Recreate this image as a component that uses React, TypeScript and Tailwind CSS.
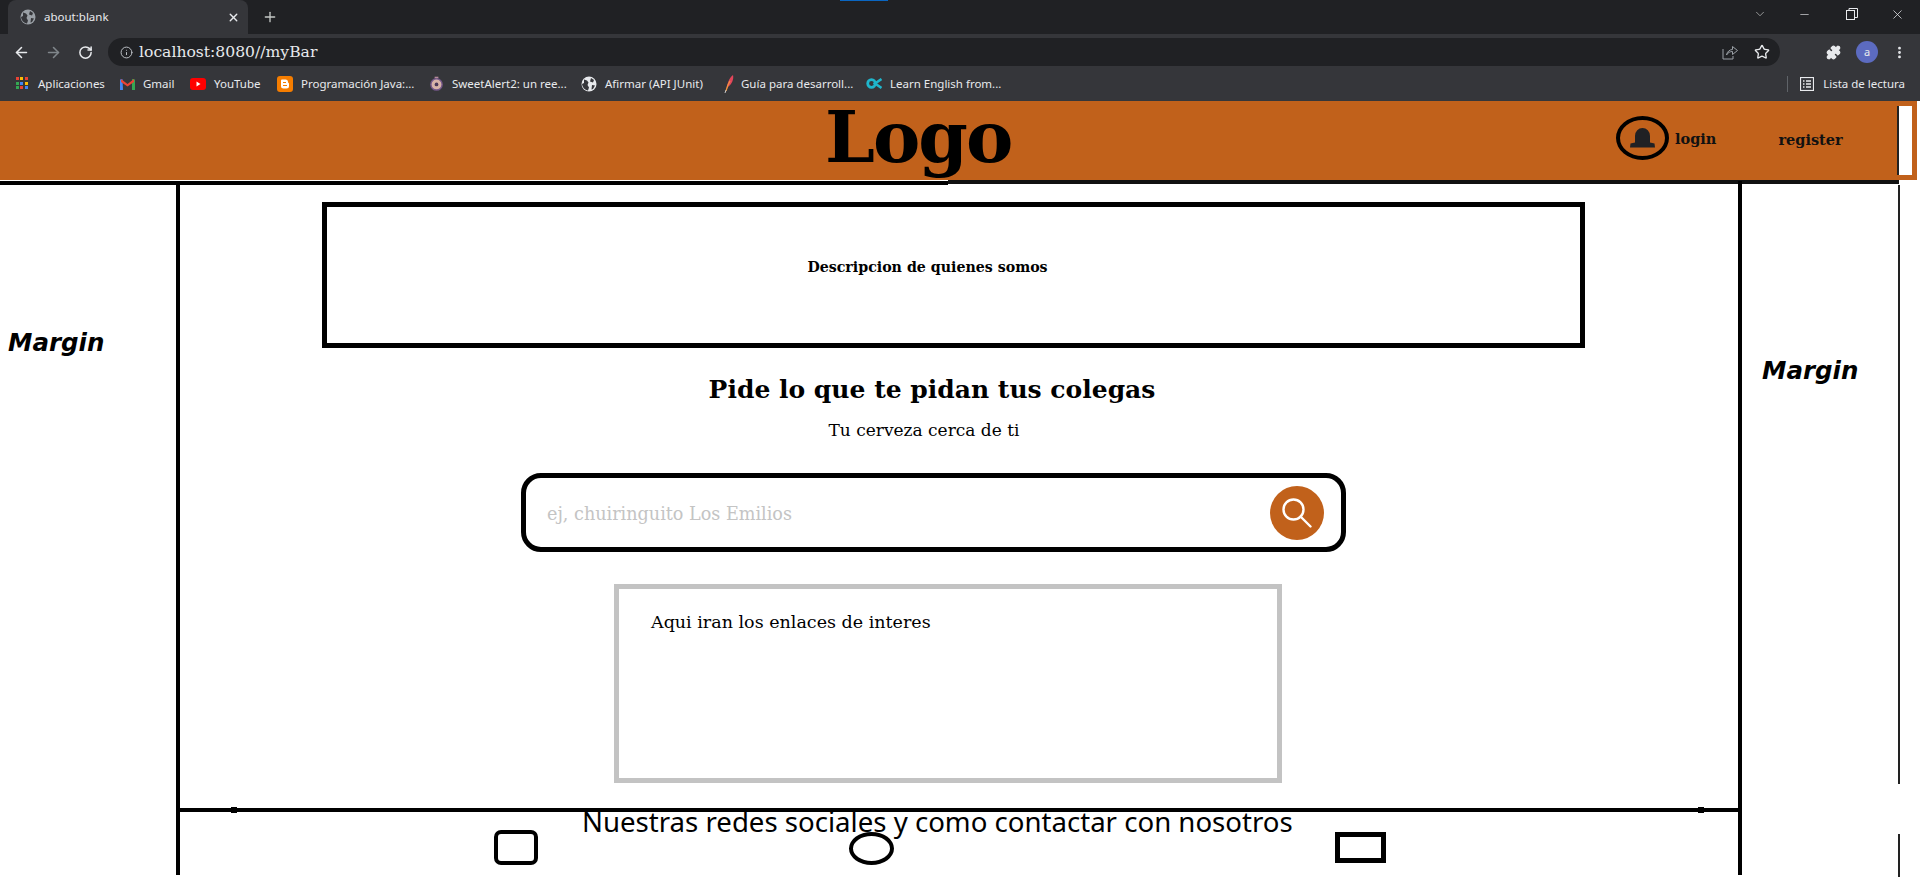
import React from "react";
import { ArrowLeft, ArrowRight, RotateCw, Info, Star, X, Plus, Minus, ChevronDown, Puzzle, MoreVertical } from "lucide-react";

const chromeFont = "font-['Noto_Sans','Liberation_Sans',sans-serif]";
const serif = "font-['DejaVu_Serif',serif]";
const marginLabel = "text-[24.5px] leading-[32px] font-bold italic text-black font-['DejaVu_Sans',sans-serif]";

function Bookmark({ width, icon, label, gap = "mr-[8px]" }: { width: string; icon: React.ReactNode; label: string; gap?: string }) {
  return (
    <div className={`flex items-center shrink-0 ${width}`}>
      <div className={`w-[16px] h-[16px] flex items-center justify-center shrink-0 ${gap}`}>{icon}</div>
      <span className="text-[11.5px] text-[#e8eaed] whitespace-nowrap">{label}</span>
    </div>
  );
}

function GlobeIcon() {
  return (
    <svg width="16" height="16" viewBox="0 0 16 16">
      <circle cx="8" cy="8" r="7.500" fill="#e8eaed" />
      <path d="M3 3.500l3 1 1.500 2-1 2.500L8 11.500l-1 3C4 14 1.500 11.500 1 8l2-1zM10 2l3 2-1 2.500-3-1zM11 9l3 .5-2 3.500-1.500.5z" fill="#35363a" />
    </svg>
  );
}

function AppsIcon() {
  const colors = ["#ea4335", "#fbbc04", "#ea4335", "#34a853", "#4285f4", "#fbbc04", "#34a853", "#ea4335", "#4285f4"];
  return (
    <div className="grid grid-cols-3 gap-[1px] w-[13px] h-[13px]">
      {colors.map((c, i) => (
        <div key={i} className="w-[3px] h-[3px]" style={{ backgroundColor: c }} />
      ))}
    </div>
  );
}

export default function App() {
  return (
    <div className={`w-[1920px] h-[877px] overflow-hidden bg-white flex flex-col ${serif}`}>
      {/* Tab strip */}
      <div className={`h-[34px] bg-[#202124] flex items-end shrink-0 relative ${chromeFont}`}>
        <div className="ml-[8px] w-[240px] h-[34px] bg-[#35363a] rounded-t-[8px] flex items-center pl-[12px] pr-[8px]">
          <svg width="16" height="16" viewBox="0 0 16 16">
            <circle cx="8" cy="8" r="7.500" fill="#9aa0a6" />
            <path d="M3 3.500l3 1 1.500 2-1 2.500L8 11.500l-1 3C4 14 1.500 11.500 1 8l2-1zM10 2l3 2-1 2.500-3-1zM11 9l3 .5-2 3.500-1.500.5z" fill="#35363a" />
          </svg>
          <span className="ml-[8px] text-[11.5px] text-[#e8eaed] flex-1">about:blank</span>
          <X size={13} className="text-[#e8eaed]" strokeWidth={2.5} />
        </div>
        <Plus size={16} className="ml-[14px] mb-[9px] text-[#c4c7c5]" strokeWidth={2} />
        <div className="absolute top-0 left-[840px] w-[48px] h-[1px] bg-[#0a66c2]" />
        <div className="ml-auto flex items-center h-[34px] pb-[6px]">
          <ChevronDown size={14} className="text-[#c4c7c5] mr-[31px]" strokeWidth={1.2} />
          <Minus size={13} className="text-[#e8eaed] mr-[35px]" strokeWidth={1.2} />
          <svg width="12" height="12" viewBox="0 0 12 12" className="mr-[32px]" fill="none" stroke="#e8eaed" strokeWidth="1">
            <rect x="0.5" y="2.5" width="8" height="9" />
            <path d="M3 2.5V0.5h8.5v9h-3" />
          </svg>
          <X size={15} className="text-[#e8eaed] mr-[15px]" strokeWidth={1.2} />
        </div>
      </div>
      <div className="h-[4px] bg-[#35363a] shrink-0" />
      {/* Address row */}
      <div className={`h-[28px] bg-[#35363a] flex items-center shrink-0 ${chromeFont}`}>
        <ArrowLeft size={17} className="ml-[13px] text-[#e8eaed]" strokeWidth={2.2} />
        <ArrowRight size={17} className="ml-[15px] text-[#80868b]" strokeWidth={2.2} />
        <RotateCw size={15} className="ml-[16px] text-[#e8eaed]" strokeWidth={2.4} />
        <div className="ml-[15px] w-[1672px] h-[28px] bg-[#202124] rounded-full flex items-center pl-[12px] pr-[10px]">
          <Info size={13} className="text-[#bdc1c6]" strokeWidth={1.8} />
          <span className={`ml-[6px] mt-[2px] text-[15.6px] text-[#e8eaed] ${serif}`}>localhost:8080//myBar</span>
          <svg width="16" height="16" viewBox="0 0 16 16" className="ml-auto" fill="none" stroke="#9aa0a6" strokeWidth="1">
            <path d="M1 5v10h10v-3" />
            <path d="M4.500 11C5 7.500 8 5.500 10.500 5.500V2.500L15.500 6.500l-5 4V7.500C8 7.500 6 8.500 4.500 11z" />
          </svg>
          <Star size={16} className="ml-[16px] text-[#e8eaed]" strokeWidth={2} />
        </div>
        <Puzzle size={15} className="ml-[46px] text-[#e8eaed]" fill="#e8eaed" />
        <div className="ml-[15px] w-[22px] h-[22px] rounded-full bg-[#5c6bc0] flex items-center justify-center text-[11px] text-[#e8eaed]">a</div>
        <MoreVertical size={15} className="ml-[14px] text-[#e8eaed]" strokeWidth={2.5} />
      </div>
      {/* Bookmarks */}
      <div className={`h-[35px] bg-[#35363a] flex items-center pl-[14px] shrink-0 ${chromeFont}`}>
        <Bookmark width="w-[105px]" icon={<AppsIcon />} label="Aplicaciones" />
        <Bookmark width="w-[71px]" label="Gmail" icon={
          <svg width="15" height="12" viewBox="0 0 15 12">
            <path d="M0 12V1.500L2.500 1 3 12z" fill="#4285f4" />
            <path d="M12 12V1l3 .5V12z" fill="#34a853" />
            <path d="M1 1l6.500 5L14 1v3L7.500 8.500 1 4z" fill="#ea4335" />
          </svg>
        } />
        <Bookmark width="w-[87px]" label="YouTube" icon={
          <svg width="16" height="12" viewBox="0 0 16 12">
            <rect width="16" height="12" rx="3" fill="#f00" />
            <path d="M6.500 3.500v5l4-2.500z" fill="#fff" />
          </svg>
        } />
        <Bookmark width="w-[151px]" label="Programación Java:..." icon={
          <svg width="16" height="16" viewBox="0 0 16 16">
            <rect width="16" height="16" rx="3" fill="#f57d00" />
            <path d="M5 3.500h3.500A2.500 2.500 0 0 1 11 6v.5c.7.300 1 .8 1 1.500v2a2.500 2.500 0 0 1-2.500 2.500h-3A2.500 2.500 0 0 1 4 10V4.500a1 1 0 0 1 1-1z" fill="#fff" />
            <path d="M6 6.500h3M6 9.500h4" stroke="#f57d00" strokeWidth="1.200" />
          </svg>
        } />
        <Bookmark width="w-[153px]" label="SweetAlert2: un ree..." icon={
          <svg width="15" height="15" viewBox="0 0 16 16">
            <circle cx="8" cy="9" r="6" fill="#d7b3a8" stroke="#75588a" strokeWidth="1.500" />
            <circle cx="8" cy="9" r="2" fill="#4b3a5a" />
            <path d="M6 1.500h4" stroke="#b58a9b" strokeWidth="1.500" />
          </svg>
        } />
        <Bookmark width="w-[140px]" label="Afirmar (API JUnit)" icon={<GlobeIcon />} />
        <Bookmark width="w-[145px]" gap="mr-[4px]" label="Guía para desarroll..." icon={
          <svg width="10" height="18" viewBox="0 0 10 18">
            <path d="M2 16C3 9 5 3 9 0c1 4-1 9-5 12z" fill="#e2465a" />
            <path d="M2 16C3 12 4 9 6 6" stroke="#f29a3c" strokeWidth="1.200" fill="none" />
            <path d="M1 18l1-3" stroke="#c9c9c9" strokeWidth="1" />
          </svg>
        } />
        <Bookmark width="w-[140px]" label="Learn English from..." icon={
          <svg width="16" height="11" viewBox="0 0 16 11">
            <circle cx="5.500" cy="5.500" r="3.800" fill="none" stroke="#1fb6cc" strokeWidth="2.800" />
            <path d="M15.500 1L9 5.500l6.500 4.500" fill="none" stroke="#1fb6cc" strokeWidth="2.500" />
          </svg>
        } />
        <div className="ml-auto flex items-center pr-[15px]">
          <div className="w-[1px] h-[16px] bg-[#5f6368] mr-[12px]" />
          <svg width="14" height="14" viewBox="0 0 14 14" className="mr-[9px]" fill="none" stroke="#e8eaed">
            <rect x="0.500" y="0.500" width="13" height="13" strokeWidth="1.200" />
            <path d="M3 4h1.500M6 4h5M3 7h1.500M6 7h5M3 10h1.500M6 10h5" strokeWidth="1.300" />
          </svg>
          <span className="text-[11.5px] text-[#e8eaed] whitespace-nowrap">Lista de lectura</span>
        </div>
      </div>

      {/* Site header */}
      <div className="h-[79px] shrink-0 mr-[3px] bg-[#c1611b] flex items-center relative">
        <span className="absolute left-[825px] top-[-10px] text-[71px] leading-[92px] font-bold text-black tracking-[-2px]">Logo</span>
        <div className="ml-[1616px] w-[53px] h-[44px] rounded-[50%] border-[4px] border-black flex items-center justify-center mt-[-6px]">
          <svg width="27" height="20" viewBox="0 0 27 20" fill="#202124">
            <path d="M6 14.500V8a7.500 8 0 0 1 15 0V14.500l4.500 1 .5 4H1l.5-4z" />
          </svg>
        </div>
        <span className="ml-[6px] text-[14.5px] font-bold text-[#111] mt-[-3px]">login</span>
        <span className="ml-[62px] text-[14.5px] font-bold text-[#111] mt-[-1px]">register</span>
        <div className="ml-auto mr-[5px] w-[15px] h-[69px] bg-white border-l-[2px] border-[#222]" />
      </div>
      <div className="h-[5px] flex shrink-0">
        <div className="w-[948px] border-t border-white bg-black" />
        <div className="w-[951px] h-[4px] bg-[#111]" />
      </div>

      {/* Main */}
      <div className="flex-1 flex min-h-0">
        <div className="w-[176px] shrink-0 pt-[142px] pl-[8px]">
          <span className={marginLabel}>Margin</span>
        </div>
        <div className="w-[1566px] shrink-0 border-x-[4px] border-black flex flex-col h-[694px] mt-[-4px] pt-[4px]">
          <div className="ml-[142px] mt-[17px] w-[1263px] h-[146px] border-[5px] border-black flex justify-center pt-[49px] pr-[52px] shrink-0">
            <span className="text-[14.2px] leading-[22px] font-bold text-black">Descripcion de quienes somos</span>
          </div>
          <div className="ml-[340px] w-[824px] text-center mt-[25px] text-[25px] leading-[34px] font-bold text-black shrink-0 whitespace-nowrap">
            Pide lo que te pidan tus colegas
          </div>
          <div className="ml-[341px] w-[806px] text-center mt-[10px] text-[17px] leading-[26px] text-black shrink-0">
            Tu cerveza cerca de ti
          </div>
          <div className="ml-[341px] mt-[30px] w-[825px] h-[79px] border-[5px] border-black rounded-[20px] flex items-center pl-[21px] pr-[17px] shrink-0">
            <span className="text-[17.6px] text-[#c4c4c4] mt-[3px]">ej, chuiringuito Los Emilios</span>
            <div className="ml-auto w-[54px] h-[54px] rounded-full bg-[#c1611b] flex items-center justify-center">
              <svg width="30" height="30" viewBox="0 0 30 30" fill="none" stroke="#fff" strokeWidth="2.400" strokeLinecap="round">
                <circle cx="11.500" cy="11.500" r="10" />
                <path d="M18.500 18.500L28.500 28.500" />
              </svg>
            </div>
          </div>
          <div className="ml-[434px] mt-[32px] w-[668px] h-[199px] border-[5px] border-[#c3c3c3] pl-[32px] pt-[20px] shrink-0">
            <span className="text-[17.5px] text-black">Aqui iran los enlaces de interes</span>
          </div>
          {/* Footer */}
          <div className="mt-[25px] h-[4px] bg-black shrink-0 flex justify-between pl-[53px] pr-[36px] mx-[-2px]">
            <div className="w-[6px] h-[6px] bg-black -mt-[1px]" />
            <div className="w-[6px] h-[6px] bg-black -mt-[1px]" />
          </div>
          <div className="ml-[402px] -mt-[4px] text-[27.6px] leading-[26px] text-black font-['Noto_Sans',sans-serif] whitespace-nowrap shrink-0">
            Nuestras redes sociales y como contactar con nosotros
          </div>
          <div className="flex items-start -mt-[4px] shrink-0">
            <div className="ml-[314px] w-[44px] h-[35px] border-[4px] border-black rounded-[7px]" />
            <div className="ml-[311px] w-[45px] h-[33px] mt-[2px] border-[4px] border-black rounded-[50%]" />
            <div className="ml-[441px] w-[51px] h-[31px] mt-[2px] border-[5px] border-black" />
          </div>
        </div>
        <div className="flex-1 flex flex-col">
          <div className="w-[158px] h-[599px] border-r-[2px] border-[#222] pl-[20px] pt-[170px]">
            <span className={marginLabel}>Margin</span>
          </div>
          <div className="h-[50px]" />
          <div className="w-[158px] flex-1 border-r-[2px] border-[#222]" />
        </div>
      </div>
    </div>
  );
}
